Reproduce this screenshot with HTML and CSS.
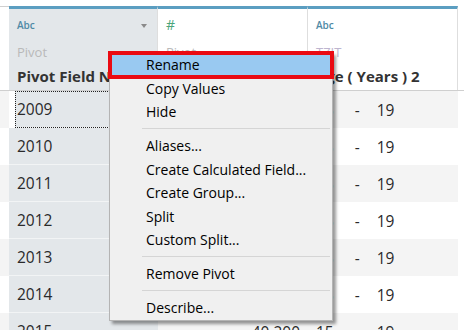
FILE: index.html
```html
<!DOCTYPE html>
<html>
<head>
<meta charset="utf-8">
<link rel="stylesheet" href="styles.css">
</head>
<body>
<div class="page">
  <div class="sheet">
    <div class="row head">
      <div class="gutter"></div>
      <div class="cell hcell sel">
        <div class="type abc">Abc<span class="caret"></span></div>
        <div class="src">Pivot</div>
        <div class="name">Pivot Field Names</div>
      </div>
      <div class="cell hcell">
        <div class="type num">#</div>
        <div class="src">Pivot</div>
        <div class="name">Pivot Field Values</div>
      </div>
      <div class="cell hcell">
        <div class="type abc">Abc</div>
        <div class="src alt">TZIT</div>
        <div class="name">Age ( Years ) 2</div>
      </div>
    </div>
    <div class="row odd">
      <div class="gutter"></div>
      <div class="cell sel focus">2009</div>
      <div class="cell num-cell">40,200</div>
      <div class="cell range"><span>15</span><span class="dash">-</span><span>19</span></div>
    </div>
    <div class="row">
      <div class="gutter"></div>
      <div class="cell sel">2010</div>
      <div class="cell num-cell">40,200</div>
      <div class="cell range"><span>15</span><span class="dash">-</span><span>19</span></div>
    </div>
    <div class="row odd">
      <div class="gutter"></div>
      <div class="cell sel">2011</div>
      <div class="cell num-cell">40,200</div>
      <div class="cell range"><span>15</span><span class="dash">-</span><span>19</span></div>
    </div>
    <div class="row">
      <div class="gutter"></div>
      <div class="cell sel">2012</div>
      <div class="cell num-cell">40,200</div>
      <div class="cell range"><span>15</span><span class="dash">-</span><span>19</span></div>
    </div>
    <div class="row odd">
      <div class="gutter"></div>
      <div class="cell sel">2013</div>
      <div class="cell num-cell">40,200</div>
      <div class="cell range"><span>15</span><span class="dash">-</span><span>19</span></div>
    </div>
    <div class="row">
      <div class="gutter"></div>
      <div class="cell sel">2014</div>
      <div class="cell num-cell">40,200</div>
      <div class="cell range"><span>15</span><span class="dash">-</span><span>19</span></div>
    </div>
    <div class="row odd">
      <div class="gutter"></div>
      <div class="cell sel">2015</div>
      <div class="cell num-cell">40,200</div>
      <div class="cell range"><span>15</span><span class="dash">-</span><span>19</span></div>
    </div>
  </div>

  <div class="menu">
    <div class="item active">Rename</div>
    <div class="item">Copy Values</div>
    <div class="item">Hide</div>
    <div class="sep"></div>
    <div class="item">Aliases...</div>
    <div class="item">Create Calculated Field...</div>
    <div class="item">Create Group...</div>
    <div class="item">Split</div>
    <div class="item">Custom Split...</div>
    <div class="sep"></div>
    <div class="item">Remove Pivot</div>
    <div class="sep"></div>
    <div class="item">Describe...</div>
  </div>
</div>
</body>
</html>
```
FILE: styles.css
```css
html, body {
  margin: 0;
  padding: 0;
  background: #ffffff;
}
.page {
  position: relative;
  width: 464px;
  height: 330px;
  overflow: hidden;
  padding-top: 6px;
  box-sizing: border-box;
  font-family: "Open Sans", "Liberation Sans", sans-serif;
}
.sheet {
  display: flex;
  flex-direction: column;
}
.row {
  display: grid;
  grid-template-columns: 9px 149px 150px 150px;
  height: 37px;
}
.row.odd .gutter,
.row.odd .cell:not(.sel) {
  background: #f4f4f4;
}
.row.head {
  height: 84px;
  border-bottom: 1px solid #cfcfcf;
}
.head .gutter {
  border-top: 1px solid #d0d0d0;
}
.cell {
  box-sizing: border-box;
  padding-left: 8px;
  display: flex;
  align-items: center;
  font-size: 15.5px;
  color: #2a2a2a;
  overflow: hidden;
  white-space: nowrap;
}
.cell.sel {
  background: #e3e7ea;
  border-bottom: 1px solid #f2f4f5;
}
.hcell {
  flex-direction: column;
  align-items: flex-start;
  justify-content: flex-start;
  border-top: 3px solid #5b9ec1;
  border-right: 1px solid #dedede;
  padding-top: 9px;
  position: relative;
}
.hcell.sel {
  border-bottom: none;
}
.type {
  font-size: 10px;
  font-weight: 600;
  height: 14px;
  line-height: 14px;
  width: 100%;
  position: relative;
}
.type.abc { color: #4f8aa6; }
.type.num {
  color: #4ba57b;
  font-size: 14px;
  font-weight: 400;
}
.caret {
  position: absolute;
  right: 10px;
  top: 6px;
  width: 0;
  height: 0;
  border-left: 3.5px solid transparent;
  border-right: 3.5px solid transparent;
  border-top: 4px solid #8a8a8a;
}
.src {
  margin-top: 12px;
  font-size: 13px;
  color: #b9b9b9;
  line-height: 16px;
}
.src.alt { color: #bdb5cf; }
.name {
  margin-top: 6px;
  font-size: 15px;
  font-weight: 700;
  color: #333333;
  line-height: 20px;
}
.focus {
  outline: 1px dotted #222;
  outline-offset: -1px;
  margin-left: 6px;
  padding-left: 2px;
}
.num-cell {
  justify-content: flex-end;
  padding-right: 8px;
}
.range .dash {
  margin-left: 21px;
  margin-right: 17px;
}

.menu {
  position: absolute;
  left: 109px;
  top: 52px;
  width: 222px;
  background: #f0f0f0;
  border: 1px solid #b4b4b4;
  box-shadow: 3px 3px 3px rgba(0, 0, 0, 0.4);
  font-family: "Open Sans", "Noto Sans", sans-serif;
  font-size: 14px;
  color: #000000;
}
.item {
  height: 23.5px;
  line-height: 23.5px;
  padding-left: 36px;
  white-space: nowrap;
}
.item.active {
  background: #99c9f1;
  outline: 4px solid #ea0a12;
  outline-offset: -2px;
  position: relative;
}
.sep {
  height: 10.5px;
  display: flex;
  align-items: center;
  padding-left: 32px;
  padding-right: 2px;
}
.sep::before {
  content: "";
  flex: 1;
  height: 1px;
  background: #d5d5d5;
}
```
